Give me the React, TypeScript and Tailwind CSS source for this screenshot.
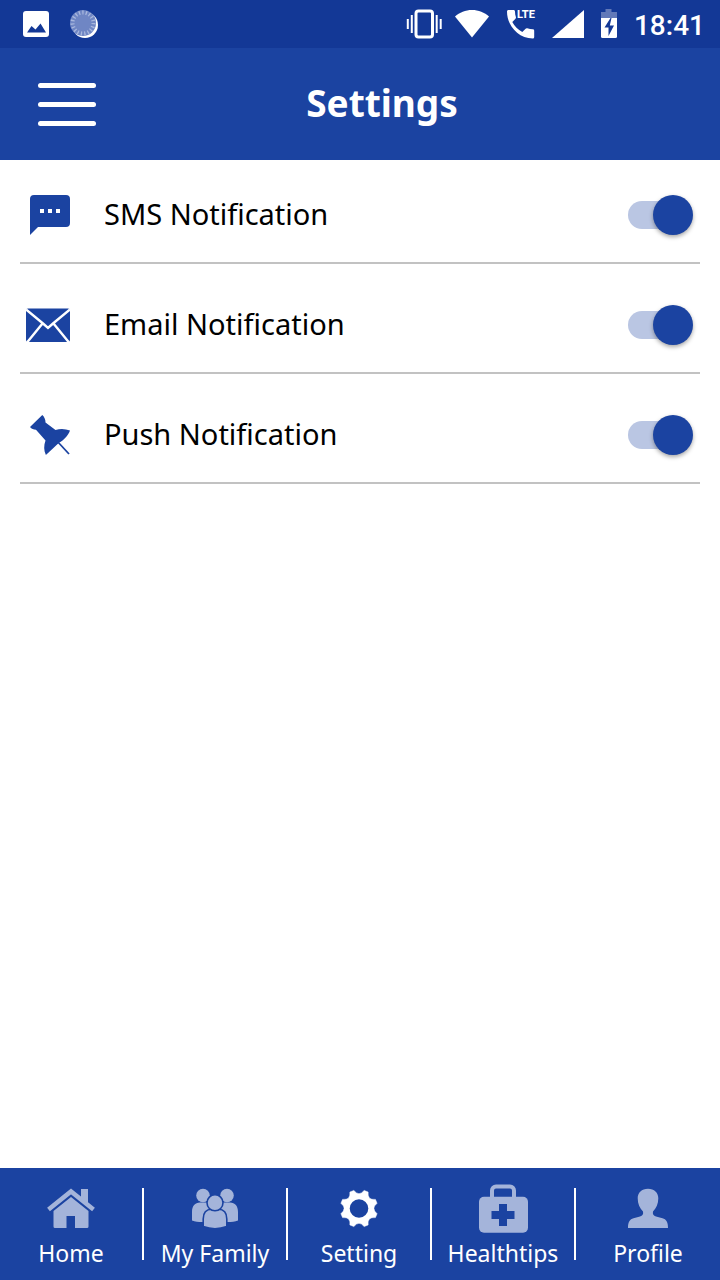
import { useState, type ReactNode } from 'react'

function StatusBar() {
  return (
    <div className="flex h-12 items-center justify-between bg-[#133896] pr-[15px] pl-[22px] text-white">
      <div className="flex items-center gap-5">
        <svg width="28" height="28" viewBox="0 0 28 28" aria-hidden="true">
          <rect x="1" y="1" width="26" height="26" rx="3" fill="#fff" />
          <path d="M5 22.500 9.500 16l4 3.500 5-6 5.500 9z" fill="#133896" />
        </svg>
        <svg width="28" height="28" viewBox="0 0 28 28" aria-hidden="true">
          <circle cx="15" cy="15" r="13" fill="#fff" />
          <circle cx="13" cy="13" r="13" fill="#6f86c4" />
          <circle cx="13" cy="13" r="10.500" fill="none" stroke="#a9b8de" strokeWidth="4" strokeDasharray="1.300 2.160" />
        </svg>
      </div>
      <div className="flex items-center gap-3">
        <svg width="36" height="32" viewBox="0 0 36 32" fill="none" stroke="#fff" aria-hidden="true">
          <rect x="10" y="3" width="16.500" height="26" rx="2.500" strokeWidth="3" />
          <path d="M5.800 7v18M1.800 11v10M30.700 7v18M34.700 11v10" strokeWidth="2" />
        </svg>
        <svg width="36" height="32" viewBox="0 0 36 32" aria-hidden="true">
          <path d="M18 29.500 1 8.500C5.500 4.500 11.500 2 18 2s12.500 2.500 17 6.500z" fill="#fff" />
        </svg>
        <svg width="38" height="32" viewBox="0 0 38 32" fill="#fff" aria-hidden="true">
          <path d="M5 3.500c0-.9.600-1.500 1.500-1.500h5c.9 0 1.500.6 1.500 1.500 0 2 .3 3.900.9 5.600.2.600 0 1.100-.4 1.600l-3.200 3.200c2.200 4.300 5.700 7.800 10 10l3.300-3.200c.4-.4 1-.6 1.600-.4 2 .600 3.700.9 5.600.9.900 0 1.400.6 1.400 1.500V29c0 .9-.5 1.500-1.400 1.500C16.500 30.500 5 18 5 3.500z" />
          <text x="15" y="10" fontSize="11" fontWeight="800" className="font-['Roboto',sans-serif]">LTE</text>
        </svg>
        <svg width="36" height="32" viewBox="0 0 36 32" aria-hidden="true">
          <path d="M0 30 32 2v28z" fill="#fff" />
        </svg>
        <svg width="18" height="32" viewBox="0 0 18 32" aria-hidden="true">
          <path d="M5.500 1h6v3H17v7H1V4h4.500z" fill="#6279b8" />
          <path d="M1 10h16v18.500a1.500 1.500 0 0 1-1.500 1.500h-13A1.500 1.500 0 0 1 1 28.500z" fill="#fff" />
          <path d="M10.500 10 4.500 19.500h4V28l5.500-10.500h-4.200l1.700-7.500z" fill="#133896" />
        </svg>
        <span className="pt-1 pl-1 font-['Roboto',sans-serif] text-[28px] leading-8 font-medium">18:41</span>
      </div>
    </div>
  )
}

function SmsIcon() {
  return (
    <svg width="44" height="44" viewBox="0 0 44 44" aria-hidden="true">
      <path d="M8 2h32a4 4 0 0 1 4 4v24a4 4 0 0 1-4 4H12l-8 8V6a4 4 0 0 1 4-4z" fill="#1b43a1" />
      <path d="M14 16h4v4h-4zM22 16h4v4h-4zM30 16h4v4h-4z" fill="#fff" />
    </svg>
  )
}

function EmailIcon() {
  return (
    <svg width="44" height="44" viewBox="0 0 44 44" aria-hidden="true">
      <rect y="5.500" width="44" height="33.500" rx="2" fill="#1b43a1" />
      <path d="M0 6.500 17 20.500l5 4.500 5-4.500L44 6.500M1 39.500 16.500 20.500M43 39.500 27.500 20.500" fill="none" stroke="#fff" strokeWidth="2.400" />
    </svg>
  )
}

function PinIcon() {
  return (
    <svg width="44" height="44" viewBox="0 0 44 44" aria-hidden="true">
      <path d="M16.300 2 4 14c1.500 1.800 3.600 2.800 6 2.800l9.500 10.700c-1.800 5-1.800 10 .4 14.500L33 29.700c5 -2.500 9-7 11-12.200-4.700-1.800-9.500-2-14.500-.6L19.500 9.500C19.500 6.500 18.500 4 16.300 2z" fill="#1b43a1" />
      <path d="M31 28 43 41" stroke="#1b43a1" strokeWidth="1.800" />
    </svg>
  )
}

function HomeIcon() {
  return (
    <svg width="50" height="50" viewBox="0 0 50 50" fill="#a4b4da" aria-hidden="true">
      <path d="M35 5h7v15l-7-5.500z" />
      <path d="M2.500 25.500 25 7.500l22.500 18" fill="none" stroke="#a4b4da" strokeWidth="4.500" />
      <path d="M25 13 42.500 27v15.500a1.500 1.500 0 0 1-1.500 1.500H29V32h-8.500v12H9a1.500 1.500 0 0 1-1.500-1.500V27z" />
    </svg>
  )
}

function FamilyIcon() {
  return (
    <svg width="50" height="50" viewBox="0 0 50 50" fill="#a4b4da" aria-hidden="true">
      <circle cx="13" cy="11.500" r="6.800" />
      <circle cx="37" cy="11.500" r="6.800" />
      <path d="M2 36.500V28c0-6 3-9.500 8-9.500h7c3 0 5 2 6 5l-9 14.500c-4.500.2-8.500-.3-12-1.500zM48 36.500V28c0-6-3-9.500-8-9.500h-7c-3 0-5 2-6 5L36 38c4.500.2 8.500-.3 12-1.500z" />
      <g stroke="#1b43a1" strokeWidth="1.600">
        <path d="M13.200 42.500V35c0-6.500 3.500-9.800 8.500-9.800h6.600c5 0 8.500 3.300 8.500 9.800v7.500c-7 2.600-16.600 2.600-23.600 0z" />
        <circle cx="25" cy="18.800" r="8" />
      </g>
    </svg>
  )
}

const polar = (deg: number, r: number) => {
  const a = (deg * Math.PI) / 180
  return `${(25 + r * Math.sin(a)).toFixed(2)} ${(24.5 - r * Math.cos(a)).toFixed(2)}`
}

// eight teeth, with a rounded notch between each pair
const gearPath =
  `M${polar(-16, 18.8)}` +
  [0, 45, 90, 135, 180, 225, 270, 315]
    .map((a) => `Q${polar(a, 11.6)} ${polar(a + 16, 18.8)}L${polar(a + 29, 18.8)}`)
    .join('') +
  'Z'

function GearIcon() {
  return (
    <svg width="50" height="50" viewBox="0 0 50 50" aria-hidden="true">
      <path d={gearPath} fill="#fff" stroke="#fff" strokeWidth="0.500" strokeLinejoin="round" />
      <circle cx="25" cy="24.500" r="9.300" fill="#1b43a1" />
    </svg>
  )
}

function KitIcon() {
  return (
    <svg width="50" height="50" viewBox="0 0 50 50" aria-hidden="true">
      <path d="M14 14V6.500A4 4 0 0 1 18 2.500h14a4 4 0 0 1 4 4V14" fill="none" stroke="#a4b4da" strokeWidth="4" />
      <rect x="1" y="12.700" width="49" height="36" rx="5" fill="#a4b4da" />
      <path d="M21 20h8v7h7.500v8H29v7h-8v-7h-7.500v-8H21z" fill="#1b43a1" />
    </svg>
  )
}

function ProfileIcon() {
  return (
    <svg width="50" height="50" viewBox="0 0 50 50" fill="#a4b4da" aria-hidden="true">
      <path d="M25 4.700c6.300 0 10.300 3.800 10.300 9.600 0 5.500-2 10-5.300 13.200-.6 2.800.5 4.200 3 5l6.500 1.800c3.700 1.100 5.500 3.400 5.500 9.700H5c0-6.300 1.800-8.600 5.500-9.700l6.500-1.800c2.500-.8 3.600-2.200 3-5-3.300-3.200-5.300-7.700-5.300-13.200 0-5.800 4-9.600 10.300-9.600z" />
    </svg>
  )
}

function SettingRow({ id, icon, label }: { id: string; icon: ReactNode; label: string }) {
  const [enabled, setEnabled] = useState(true)

  return (
    <li className="flex h-24 items-center gap-[34px] border-b-2 border-[#c2c2c2] pr-4 pl-1.5">
      {icon}
      <label htmlFor={id} className="flex-1 pb-0.5 text-[29px] leading-9 text-black">
        {label}
      </label>
      <input
        id={id}
        type="checkbox"
        role="switch"
        checked={enabled}
        onChange={(e) => setEnabled(e.target.checked)}
        className="relative h-7 w-14 appearance-none rounded-full bg-gray-300 before:absolute before:-top-1.5 before:-left-2 before:size-10 before:rounded-full before:bg-gray-50 before:shadow-[0_2px_4px_rgba(0,0,0,0.35)] checked:bg-[#bac6e3] checked:before:left-[25px] checked:before:bg-[#1b43a1]"
      />
    </li>
  )
}

const tabs = [
  { label: 'Home', icon: <HomeIcon /> },
  { label: 'My Family', icon: <FamilyIcon /> },
  { label: 'Setting', icon: <GearIcon /> },
  { label: 'Healthtips', icon: <KitIcon /> },
  { label: 'Profile', icon: <ProfileIcon /> },
]

export default function App() {
  return (
    <div className="flex min-h-screen flex-col bg-white font-['Noto_Sans',sans-serif]">
      <StatusBar />

      {/* Header */}
      <header className="flex h-28 items-center bg-[#1b43a1] pr-[52px] pl-[38px] text-white">
        <button type="button" aria-label="Menu" className="flex w-[58px] flex-col gap-[14px]">
          <span className="h-[5px] w-full rounded-full bg-white" />
          <span className="h-[5px] w-full rounded-full bg-white" />
          <span className="h-[5px] w-full rounded-full bg-white" />
        </button>
        <h1 className="flex-1 pb-0.5 text-center text-[37px] leading-12 font-bold">Settings</h1>
      </header>

      <main className="flex-1 px-5 pt-2">
        <ul className="flex flex-col gap-[14px]">
          <SettingRow id="sms" icon={<SmsIcon />} label="SMS Notification" />
          <SettingRow id="email" icon={<EmailIcon />} label="Email Notification" />
          <SettingRow id="push" icon={<PinIcon />} label="Push Notification" />
        </ul>
      </main>

      {/* Bottom tabs */}
      <nav className="grid h-28 grid-cols-5 bg-[#1b43a1] text-white">
        {tabs.map((tab, i) => (
          <div key={tab.label} className="flex items-center">
            <a
              href="#"
              aria-current={tab.label === 'Setting' ? 'page' : undefined}
              className="flex h-full flex-1 flex-col items-center gap-1 pt-4"
            >
              {tab.icon}
              <span className="text-[23px] leading-[30px] whitespace-nowrap">{tab.label}</span>
            </a>
            {i < tabs.length - 1 && <span className="h-[72px] w-0.5 bg-white" />}
          </div>
        ))}
      </nav>
    </div>
  )
}
